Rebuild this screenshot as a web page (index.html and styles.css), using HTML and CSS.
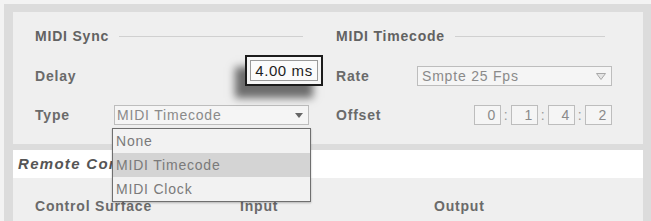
FILE: index.html
```html
<!DOCTYPE html>
<html lang="en">
  <head>
    <meta charset="UTF-8" />
    <title>MIDI Sync</title>
    <link rel="stylesheet" href="styles.css">
  </head>
  <body>
    <div class="frame">
      <section class="panel sync">
        <div class="col">
          <div class="head"><span>MIDI Sync</span><i class="rule"></i></div>
          <div class="row">
            <span class="label">Delay</span>
            <div class="edit"><div class="edit-in">4.00 ms</div></div>
          </div>
          <div class="row">
            <span class="label">Type</span>
            <div class="select">
              <span>MIDI Timecode</span>
              <svg width="8" height="5" viewBox="0 0 8 5"><path d="M0 0h8L4 5z" fill="#666"/></svg>
            </div>
            <ul class="menu">
              <li>None</li>
              <li class="on">MIDI Timecode</li>
              <li>MIDI Clock</li>
            </ul>
          </div>
        </div>
        <div class="col right">
          <div class="head"><span>MIDI Timecode</span><i class="rule"></i></div>
          <div class="row">
            <span class="label">Rate</span>
            <div class="select">
              <span>Smpte 25 Fps</span>
              <svg width="10" height="7" viewBox="0 0 10 7"><path d="M0.5 0.5h9L5 6.5z" fill="#e4e4e4" stroke="#a8a8a8"/></svg>
            </div>
          </div>
          <div class="row">
            <span class="label">Offset</span>
            <div class="offset">
              <span class="num">0</span><span class="colon">:</span>
              <span class="num">1</span><span class="colon">:</span>
              <span class="num">4</span><span class="colon">:</span>
              <span class="num">2</span>
            </div>
          </div>
        </div>
      </section>
      <!-- the open Type menu covers the rest of this title -->
      <div class="bar">Remote Control Surfaces</div>
      <section class="panel lower">
        <span>Control Surface</span>
        <span>Input</span>
        <span>Output</span>
      </section>
    </div>
  </body>
</html>
```

FILE: styles.css
```css
* {
  margin: 0;
  padding: 0;
  box-sizing: border-box;
}
html,
body {
  height: 221px;
  overflow: hidden;
}
body {
  background: #f3f3f3;
  font-family: "Liberation Sans", Arial, sans-serif;
  font-size: 14px;
  letter-spacing: 0.8px;
}
.frame {
  margin: 4px 0 0 4px;
  background: #dcdcdc;
  padding: 8px 8px 0 9px;
  height: 217px;
  display: flex;
  flex-direction: column;
}
.panel {
  background: #efefef;
}
.sync {
  display: grid;
  grid-template-columns: 276px 276px;
  column-gap: 25px;
  padding: 14px 0 19px 22px;
  height: 132px;
  flex: none;
}
.head {
  display: flex;
  align-items: center;
  height: 20px;
  font-weight: bold;
  color: #626262;
}
.rule {
  flex: 1;
  height: 1px;
  background: #d0d0d0;
  margin: 0 8px 0 10px;
}
.right .rule {
  margin-right: 7px;
}
.row {
  position: relative;
  display: flex;
  align-items: center;
  height: 20px;
  margin-top: 20px;
}
.row + .row {
  margin-top: 19px;
}
.label {
  width: 79px;
  font-weight: bold;
  color: #6a6a6a;
}
.right .label {
  width: 81px;
}
.select {
  display: flex;
  align-items: center;
  justify-content: space-between;
  width: 195px;
  height: 20px;
  padding: 0 5px 0 2px;
  background: #f5f5f5;
  border: 1px solid #bdbdbd;
  color: #8a8a8a;
}
.right .select {
  padding-left: 4px;
}
.edit {
  position: absolute;
  left: 210px;
  top: -11px;
  width: 78px;
  height: 31px;
  border: 2px solid #1c1c1c;
  padding: 3px;
  background: #f6f6f6;
  box-shadow: -10px 12px 8px rgba(0, 0, 0, 0.55);
  z-index: 2;
}
.edit-in {
  height: 100%;
  border: 1px solid #9a9a9a;
  background: #fbfbfb;
  color: #1e1e1e;
  font-size: 15px;
  line-height: 19px;
  text-align: center;
  letter-spacing: 0.6px;
}
.menu {
  position: absolute;
  left: 77px;
  top: 23px;
  width: 199px;
  list-style: none;
  background: #f2f2f2;
  border: 1px solid #6f6f6f;
  box-shadow: 0 1px 2px rgba(0, 0, 0, 0.25);
  z-index: 3;
}
.menu li {
  height: 24px;
  line-height: 24px;
  padding-left: 3px;
  color: #7a7a7a;
}
.menu li.on {
  background: #d4d4d4;
}
.offset {
  display: flex;
  align-items: center;
  margin-left: auto;
}
.num {
  width: 27px;
  height: 20px;
  border: 1px solid #bdbdbd;
  background: #f5f5f5;
  color: #8a8a8a;
  text-align: right;
  padding-right: 4px;
  line-height: 18px;
}
.colon {
  width: 10px;
  text-align: center;
  color: #9a9a9a;
}
.bar {
  margin-top: 6px;
  height: 28px;
  line-height: 28px;
  padding-left: 5px;
  background: #fff;
  font-size: 15px;
  letter-spacing: 1.3px;
  font-weight: bold;
  font-style: italic;
  color: #555;
  white-space: nowrap;
  overflow: hidden;
  flex: none;
}
.lower {
  flex: 1;
  display: grid;
  grid-template-columns: 205px 194px auto;
  align-content: start;
  padding: 20px 0 0 22px;
  font-weight: bold;
  color: #6a6a6a;
}
```
